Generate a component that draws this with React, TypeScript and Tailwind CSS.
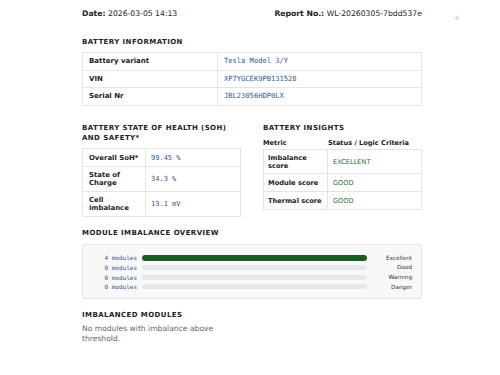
const infoRows = [
  { label: "Battery variant", value: "Tesla Model 3/Y" },
  { label: "VIN", value: "XP7YGCEK9PB131528" },
  { label: "Serial Nr", value: "JBL23056HDP0LX" },
];

const sohRows = [
  { label: "Overall SoH*", value: "99.45 %", h: "h-[18px]" },
  { label: "State of Charge", value: "34.3 %", h: "h-[25px]" },
  { label: "Cell imbalance", value: "13.1 mV", h: "h-[25px]" },
];

const insightRows = [
  { label: "Imbalance score", value: "EXCELLENT", h: "h-[24px]" },
  { label: "Module score", value: "GOOD", h: "h-[18px]" },
  { label: "Thermal score", value: "GOOD", h: "h-[18px]" },
];

const bars = [
  { count: 4, name: "Excellent", pct: 100 },
  { count: 0, name: "Good", pct: 0 },
  { count: 0, name: "Warning", pct: 0 },
  { count: 0, name: "Danger", pct: 0 },
];

const mono = "font-['DejaVu_Sans_Mono',monospace]";

function Title({ children, className = "" }: { children: React.ReactNode; className?: string }) {
  return (
    <h2 className={`text-[7px] leading-[10px] font-bold tracking-[0.06em] text-[#222] ${className}`}>
      {children}
    </h2>
  );
}

export default function App() {
  return (
    <div className="relative w-[500px] h-[375px] bg-white overflow-hidden font-['DejaVu_Sans',sans-serif] text-[#222]">
      <svg className="absolute left-[454px] top-[14px]" width="6" height="6" viewBox="0 0 6 6">
        <path d="M3 0.5 L5.5 5.5 L0.5 5.5 Z" fill="#dcdcdc" />
      </svg>

      <div className="pl-[82px] pr-[78px] pt-[9px]">
        <div className="flex justify-between items-center h-[10px] text-[7.7px]">
          <p>
            <span className="font-bold">Date:</span> 2026-03-05 14:13
          </p>
          <p>
            <span className="font-bold">Report No.:</span> WL-20260305-7bdd537e
          </p>
        </div>

        <Title className="mt-[18px]">BATTERY INFORMATION</Title>
        <table className="mt-[5px] w-full table-fixed border-collapse border border-[#e4e4e4] text-[7px]">
          <colgroup>
            <col className="w-[135px]" />
            <col />
          </colgroup>
          <tbody>
            {infoRows.map((r) => (
              <tr key={r.label} className="h-[17.7px] border-b border-[#e4e4e4]">
                <td className="px-[6px] font-bold border-r border-[#e4e4e4]">{r.label}</td>
                <td className={`px-[6px] text-[7.1px] text-[#34558f] ${mono}`}>{r.value}</td>
              </tr>
            ))}
          </tbody>
        </table>

        <div className="mt-[17px] grid grid-cols-2 gap-[22px]">
          <div>
            <Title>
              BATTERY STATE OF HEALTH (SOH)
              <br />
              AND SAFETY*
            </Title>
            <table className="mt-[5px] w-full table-fixed border-collapse border border-[#e4e4e4] text-[6.9px] leading-[8px]">
              <colgroup>
                <col className="w-[63px]" />
                <col />
              </colgroup>
              <tbody>
                {sohRows.map((r) => (
                  <tr key={r.label} className={`${r.h} border-b border-[#e4e4e4]`}>
                    <td className="px-[6px] font-bold border-r border-[#e4e4e4]">{r.label}</td>
                    <td className={`px-[5px] text-[7px] text-[#34558f] ${mono}`}>{r.value}</td>
                  </tr>
                ))}
              </tbody>
            </table>
          </div>

          <div>
            <Title>BATTERY INSIGHTS</Title>
            <div className="mt-[6px] flex h-[10px] items-center text-[6.6px] font-bold">
              <span className="w-[65px]">Metric</span>
              <span>Status / Logic Criteria</span>
            </div>
            <table className="w-full table-fixed border-collapse border border-[#e4e4e4] text-[6.7px] leading-[8px]">
              <colgroup>
                <col className="w-[64px]" />
                <col />
              </colgroup>
              <tbody>
                {insightRows.map((r) => (
                  <tr key={r.label} className={`${r.h} border-b border-[#e4e4e4]`}>
                    <td className="px-[4px] font-bold border-r border-[#e4e4e4]">{r.label}</td>
                    <td className="px-[5px] text-[6.6px] text-[#2f6b3a]">{r.value}</td>
                  </tr>
                ))}
              </tbody>
            </table>
          </div>
        </div>

        <Title className="mt-[11px]">MODULE IMBALANCE OVERVIEW</Title>
        <div className="mt-[6px] h-[55px] bg-[#f8f8f8] border border-[#e6e6e6] rounded-[2px] pt-[8px] pl-[8px] pr-[9px]">
          {bars.map((b) => (
            <div key={b.name} className="flex items-center h-[9.7px]">
              <span className={`w-[46px] text-right text-[6px] text-[#34558f] ${mono}`}>{b.count} modules</span>
              <div className="ml-[5px] w-[225px] h-[5px] rounded-full bg-[#e6e8ec]">
                {b.pct > 0 && <div className="h-[6px] -mt-[0.5px] rounded-full bg-[#1e5a25]" style={{ width: `${b.pct}%` }} />}
              </div>
              <span className="flex-1 text-right text-[5.7px] text-[#333]">{b.name}</span>
            </div>
          ))}
        </div>

        <div className="grid grid-cols-2 gap-[22px]">
          <div>
            <Title className="mt-[11px]">IMBALANCED MODULES</Title>
            <p className="mt-[4px] text-[7.6px] leading-[10px] text-[#666]">
              No modules with imbalance above threshold.
            </p>
          </div>
        </div>
      </div>
    </div>
  );
}
